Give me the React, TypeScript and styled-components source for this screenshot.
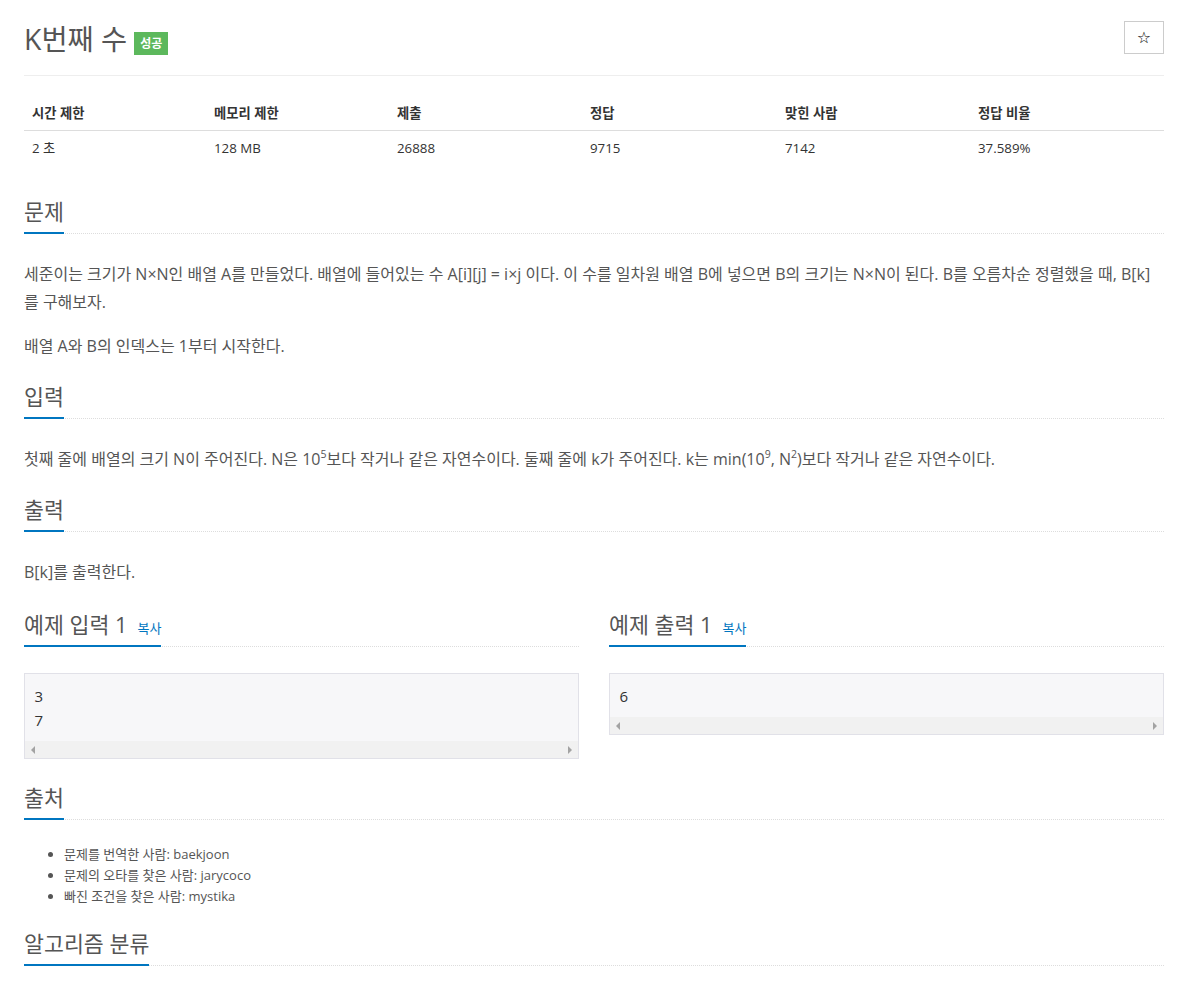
import React from "react";
import styled, { createGlobalStyle } from "styled-components";

const GlobalStyle = createGlobalStyle`
  body {
    margin: 0;
    background: #fff;
    font-family: "Open Sans", "Noto Sans CJK KR", sans-serif;
    color: #555;
  }
`;

const Page = styled.div`
  width: 1140px;
  margin-left: 24px;
`;

const Header = styled.div`
  display: flex;
  align-items: flex-start;
  justify-content: space-between;
  padding-top: 21px;
  padding-bottom: 18px;
  border-bottom: 1px solid #eee;
`;

const TitleGroup = styled.div`
  display: flex;
  align-items: center;
`;

const Title = styled.h1`
  margin: 0;
  font-size: 28.4px;
  font-weight: 400;
  line-height: 36px;
  color: #555;
`;

const Badge = styled.span`
  margin-left: 7px;
  margin-top: 8px;
  padding: 0 6px;
  height: 23px;
  display: inline-flex;
  align-items: center;
  background: #5cb85c;
  color: #fff;
  font-size: 12px;
  font-weight: 700;
`;

const StarButton = styled.button`
  width: 40px;
  height: 33px;
  padding: 0;
  border: 1px solid #ccc;
  border-radius: 0;
  background: #fff;
  color: #000;
  font-family: "DejaVu Sans", sans-serif;
  font-size: 16px;
  line-height: 1;
`;

const InfoTable = styled.table`
  width: 100%;
  margin-top: 20px;
  margin-bottom: 33px;
  border-collapse: collapse;
  font-size: 13.3px;
  color: #333;

  th {
    text-align: left;
    font-weight: 700;
    padding: 8px;
    line-height: 18px;
    border-bottom: 1.5px solid #ddd;
  }

  td {
    padding: 8px;
    line-height: 18px;
  }
`;

const Section = styled.section`
  padding-bottom: 7px;
`;

const Headline = styled.div`
  border-bottom: 1px dotted #ddd;
  margin-bottom: 26px;
`;

const HeadlineTitle = styled.h2`
  display: inline-block;
  margin: 0 0 -1px;
  padding-bottom: 6px;
  border-bottom: 2px solid #0076c0;
  font-size: 21.7px;
  font-weight: 400;
  line-height: 28px;
  color: #555;
`;

const CopyLink = styled.a`
  margin-left: 10px;
  font-size: 13px;
  line-height: 1;
  color: #0076c0;
  text-decoration: none;
`;

const Paragraph = styled.p`
  margin: 0 0 16px;
  font-size: 16px;
  line-height: 28px;
  color: #555;
`;

const Sup = styled.sup`
  font-size: 10.5px;
  line-height: 0;
  position: relative;
  top: -1px;
`;

const SampleRow = styled.div`
  display: grid;
  grid-template-columns: 1fr 1fr;
  column-gap: 30px;
  margin-top: 2px;
`;

const SampleBox = styled.div`
  margin-bottom: 18px;
  border: 1px solid #e1e1e8;
  background: #f7f7f9;
`;

const SampleText = styled.pre`
  margin: 0;
  padding: 9.5px 9.5px;
  font-family: "Open Sans", sans-serif;
  font-size: 15px;
  line-height: 24px;
  color: #333;
`;

const ScrollTrack = styled.div`
  height: 17px;
  background: #f1f1f1;
  display: flex;
  align-items: center;
  justify-content: space-between;
  padding: 0 6px;
`;

const Arrow = styled.span<{ $dir: "left" | "right" }>`
  width: 0;
  height: 0;
  border-top: 4px solid transparent;
  border-bottom: 4px solid transparent;
  ${({ $dir }) =>
    $dir === "left"
      ? "border-right: 4px solid #a3a3a3;"
      : "border-left: 4px solid #a3a3a3;"}
`;

const SourceList = styled.ul`
  margin: -2px 0 16px;
  padding-left: 40px;
  font-size: 13px;
  line-height: 21px;
  color: #555;
`;

const stats = [
  { label: "시간 제한", value: "2 초", width: 182 },
  { label: "메모리 제한", value: "128 MB", width: 183 },
  { label: "제출", value: "26888", width: 193 },
  { label: "정답", value: "9715", width: 195 },
  { label: "맞힌 사람", value: "7142", width: 193 },
  { label: "정답 비율", value: "37.589%", width: 194 },
];

const Sample: React.FC<{ title: string; lines: string[] }> = ({
  title,
  lines,
}) => (
  <Section>
    <Headline>
      <HeadlineTitle>
        {title}
        <CopyLink href="#">복사</CopyLink>
      </HeadlineTitle>
    </Headline>
    <SampleBox>
      <SampleText>{lines.join("\n")}</SampleText>
      <ScrollTrack>
        <Arrow $dir="left" />
        <Arrow $dir="right" />
      </ScrollTrack>
    </SampleBox>
  </Section>
);

export default function App() {
  return (
    <Page>
      <GlobalStyle />
      <Header>
        <TitleGroup>
          <Title>K번째 수</Title>
          <Badge>성공</Badge>
        </TitleGroup>
        <StarButton>☆</StarButton>
      </Header>

      <InfoTable>
        <colgroup>
          {stats.map((s) => (
            <col key={s.label} style={{ width: s.width }} />
          ))}
        </colgroup>
        <thead>
          <tr>
            {stats.map((s) => (
              <th key={s.label}>{s.label}</th>
            ))}
          </tr>
        </thead>
        <tbody>
          <tr>
            {stats.map((s) => (
              <td key={s.label}>{s.value}</td>
            ))}
          </tr>
        </tbody>
      </InfoTable>

      <Section>
        <Headline>
          <HeadlineTitle>문제</HeadlineTitle>
        </Headline>
        <Paragraph>
          세준이는 크기가 N×N인 배열 A를 만들었다. 배열에 들어있는 수 A[i][j]
          = i×j 이다. 이 수를 일차원 배열 B에 넣으면 B의 크기는 N×N이 된다.
          B를 오름차순 정렬했을 때, B[k]
          <wbr />를 구해보자.
        </Paragraph>
        <Paragraph>배열 A와 B의 인덱스는 1부터 시작한다.</Paragraph>
      </Section>

      <Section>
        <Headline>
          <HeadlineTitle>입력</HeadlineTitle>
        </Headline>
        <Paragraph>
          첫째 줄에 배열의 크기 N이 주어진다. N은 10<Sup>5</Sup>보다 작거나
          같은 자연수이다. 둘째 줄에 k가 주어진다. k는 min(10<Sup>9</Sup>, N
          <Sup>2</Sup>)보다 작거나 같은 자연수이다.
        </Paragraph>
      </Section>

      <Section>
        <Headline>
          <HeadlineTitle>출력</HeadlineTitle>
        </Headline>
        <Paragraph>B[k]를 출력한다.</Paragraph>
      </Section>

      <SampleRow>
        <Sample title="예제 입력 1" lines={["3", "7"]} />
        <Sample title="예제 출력 1" lines={["6"]} />
      </SampleRow>

      <Section>
        <Headline>
          <HeadlineTitle>출처</HeadlineTitle>
        </Headline>
        <SourceList>
          <li>문제를 번역한 사람: baekjoon</li>
          <li>문제의 오타를 찾은 사람: jarycoco</li>
          <li>빠진 조건을 찾은 사람: mystika</li>
        </SourceList>
      </Section>

      <Section>
        <Headline>
          <HeadlineTitle>알고리즘 분류</HeadlineTitle>
        </Headline>
      </Section>
    </Page>
  );
}
